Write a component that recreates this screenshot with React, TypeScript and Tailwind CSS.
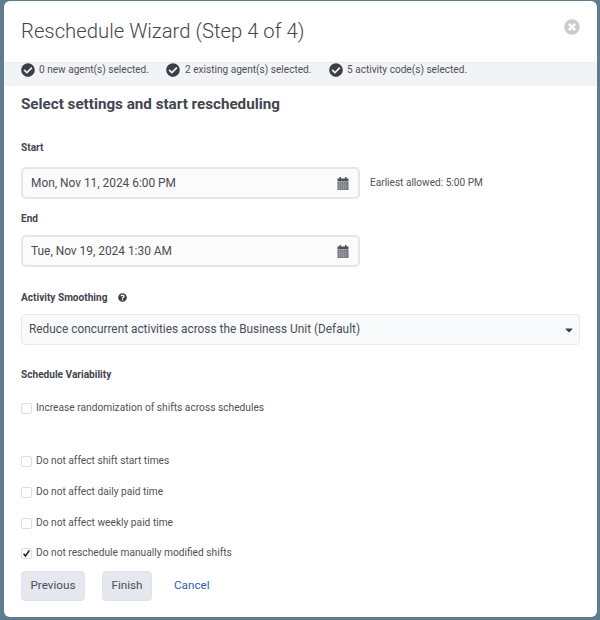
import { FaCaretDown, FaCheckCircle, FaQuestionCircle, FaTimesCircle } from 'react-icons/fa';

const selections = ['0 new agent(s) selected.', '2 existing agent(s) selected.', '5 activity code(s) selected.'];

function CalendarIcon() {
  return (
    <svg width="12" height="13" viewBox="0 0 12 13" className="text-[#4c4f57]">
      <rect x="2.5" y="0" width="1.5" height="3" fill="currentColor" />
      <rect x="8" y="0" width="1.5" height="3" fill="currentColor" />
      <rect x="0.5" y="1.5" width="11" height="3" fill="currentColor" />
      <rect x="0.5" y="5" width="11" height="8" fill="#6a6d75" />
      <path d="M0.5 7h11M0.5 9h11M0.5 11h11M2.5 5v8M4.5 5v8M6.5 5v8M8.5 5v8" stroke="#a9abb0" strokeWidth="0.6" fill="none" />
    </svg>
  );
}

function DateField({ value }: { value: string }) {
  return (
    <div className="flex h-[32px] w-[339px] items-center justify-between rounded-[5px] border-2 border-[#e4e6ea] bg-[#fbfbfc] pl-[8px] pr-[9px] text-[11.9px] text-[#4a4d55]">
      <span className="pt-[2px]">{value}</span>
      <CalendarIcon />
    </div>
  );
}

function Check({ label, checked, className }: { label: string; checked?: boolean; className: string }) {
  return (
    <div className={`flex items-center ${className}`}>
      <span className="mt-[2px] flex h-[11px] w-[11px] items-center justify-center rounded-[2px] border border-[#dcdee2] bg-white">
        {checked && (
          <svg width="9" height="9" viewBox="0 0 9 9" fill="none" stroke="#1c1e22" strokeWidth="1.6">
            <path d="M1.6 4.8 L3.5 7 L7.4 1.4" />
          </svg>
        )}
      </span>
      <span className="ml-[4px] mt-[2px] text-[10.2px] leading-[14px] text-[#4f525a]">{label}</span>
    </div>
  );
}

export default function App() {
  return (
    <div className="h-[620px] w-[600px] overflow-hidden bg-[#5f7d90] pl-[4px] pt-px font-['Roboto',sans-serif]">
      <div className="h-[616px] w-[593px] rounded-[6px] bg-white">
        <div className="relative h-[61px] pl-[17px] pt-[15px] text-[20.3px] font-light leading-[30px] text-[#43464e]">
          Reschedule Wizard (Step 4 of 4)
          <FaTimesCircle size={16} className="absolute right-[17px] top-[18px] text-[#cccccc]" />
        </div>
        <div className="flex h-[24px] items-center border-t border-[#e9ebef] bg-[#f2f3f7] pb-[9px] pl-[17px] text-[10.1px] text-[#4f525a]">
          <span className="flex w-[145px] items-center gap-[4px]">
            <FaCheckCircle size={14} className="text-[#3c3f48]" />
            {selections[0]}
          </span>
          <span className="flex w-[163px] items-center gap-[5px]">
            <FaCheckCircle size={14} className="text-[#3c3f48]" />
            {selections[1]}
          </span>
          <span className="flex items-center gap-[4px]">
            <FaCheckCircle size={14} className="text-[#3c3f48]" />
            {selections[2]}
          </span>
        </div>
        <div className="px-[17px]">
          <h2 className="mt-[8px] text-[15.2px] font-bold leading-[20px] text-[#43464e]">Select settings and start rescheduling</h2>
          <div className="mt-[27px] text-[10.1px] font-bold leading-[14px] text-[#43464e]">Start</div>
          <div className="mt-[12px] flex items-center">
            <DateField value="Mon, Nov 11, 2024 6:00 PM" />
            <span className="ml-[10px] text-[10.1px] text-[#4f525a]">Earliest allowed: 5:00 PM</span>
          </div>
          <div className="mt-[13px] text-[10.1px] font-bold leading-[14px] text-[#43464e]">End</div>
          <div className="mt-[9px]">
            <DateField value="Tue, Nov 19, 2024 1:30 AM" />
          </div>
          <div className="mt-[24px] flex items-center text-[10.1px] font-bold leading-[14px] text-[#43464e]">
            Activity Smoothing
            <FaQuestionCircle size={9} className="mb-[2px] ml-[11px] text-[#3c3f48]" />
          </div>
          <div className="mt-[9px] flex h-[31px] w-[559px] items-center justify-between rounded-[4px] border border-[#e6e8ec] bg-[#f9fafb] pl-[7px] pr-[4px] text-[11.85px] text-[#4a4d55]">
            <span className="pt-px">Reduce concurrent activities across the Business Unit (Default)</span>
            <FaCaretDown size={12} className="text-[#3c3f48]" />
          </div>
          <div className="mt-[23px] text-[10.1px] font-bold leading-[14px] text-[#43464e]">Schedule Variability</div>
          <Check className="mt-[17px]" label="Increase randomization of shifts across schedules" />
          <Check className="mt-[37px]" label="Do not affect shift start times" />
          <Check className="mt-[15px]" label="Do not affect daily paid time" />
          <Check className="mt-[15px]" label="Do not affect weekly paid time" />
          <Check className="mt-[14px]" label="Do not reschedule manually modified shifts" checked />
          <div className="mt-[11px] flex items-center text-[11.7px] text-[#4a4d55]">
            <button className="h-[30px] w-[64px] rounded-[4px] border border-[#dfe2e8] bg-[#e5e8ef]">Previous</button>
            <button className="ml-[17px] h-[30px] w-[50px] rounded-[4px] border border-[#dfe2e8] bg-[#e5e8ef]">Finish</button>
            <a className="mb-px ml-[22px] text-[#2a5db0]">Cancel</a>
          </div>
        </div>
      </div>
    </div>
  );
}
